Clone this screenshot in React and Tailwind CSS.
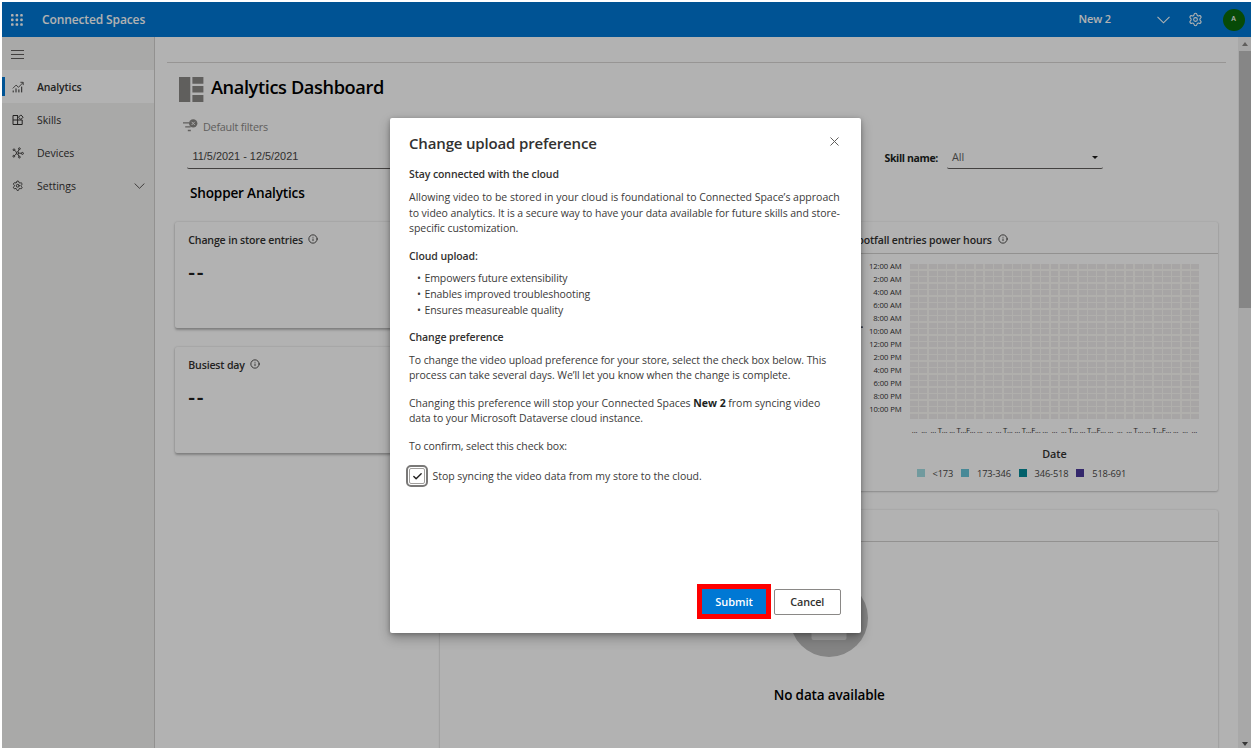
import { Settings, Info, X, Check } from "lucide-react";

const HOURS = [
  "12:00 AM", "2:00 AM", "4:00 AM", "6:00 AM", "8:00 AM", "10:00 AM",
  "12:00 PM", "2:00 PM", "4:00 PM", "6:00 PM", "8:00 PM", "10:00 PM",
];

function dayLabel(i) {
  const day = i % 7;
  if (day === 3 || day === 5) return "T...";
  if (day === 6 && i < 30) return "F...";
  return "...";
}

function Waffle() {
  return (
    <svg width="14" height="14" viewBox="0 0 14 14" fill="#ffffff">
      {[1, 5.6, 10.2].map((y) =>
        [1, 5.6, 10.2].map((x) => <rect key={`${x}-${y}`} x={x} y={y} width="2.6" height="2.6" rx="0.9" />)
      )}
    </svg>
  );
}

function AnalyticsIcon() {
  return (
    <svg width="12" height="12" viewBox="0 0 12 12" fill="none" stroke="#323130" strokeWidth="0.8">
      <path d="M1.2 11.4V9.5M4 11.4V7.4M6.9 11.4V8.4M9.7 11.4V5.6" strokeWidth="1" />
      <path d="M0.8 7.4 4.1 4.1l2.4 2.2L10.8 1.8M8.4 1.3h2.8v2.8" />
    </svg>
  );
}

function SkillsIcon() {
  return (
    <svg width="12" height="12" viewBox="0 0 12 12" fill="none" stroke="#323130" strokeWidth="1">
      <path d="M6 1.5H1v9h9.2V6H1M5.6 1.5v9" />
      <path d="M8.8 0.9 11.1 3.2 8.8 5.5 6.5 3.2z" />
    </svg>
  );
}

function DevicesIcon() {
  return (
    <svg width="12" height="12" viewBox="0 0 12 12" fill="none" stroke="#323130" strokeWidth="0.9">
      <circle cx="5.4" cy="6" r="1.2" />
      <circle cx="2" cy="2.8" r="0.9" />
      <circle cx="7.4" cy="1.7" r="0.9" />
      <circle cx="10.4" cy="6.4" r="1" />
      <circle cx="7.4" cy="10.1" r="0.9" />
      <circle cx="1.8" cy="9.2" r="0.9" />
      <path d="M2.8 3.5 4.4 5M7 2.6 6 4.8M9.4 6.3 6.7 6.1M6.9 9.2 6 7.2M2.5 8.5 4.4 6.9" />
    </svg>
  );
}

function DashboardIcon() {
  return (
    <svg width="25" height="25" viewBox="0 0 25 25" fill="#8a8886">
      <path d="M0 0h11.3v25H0zM13.4 0h11v6.8h-11zM13.4 9h11v6.6h-11zM13.4 18h11v7h-11z" />
    </svg>
  );
}

function FilterIcon() {
  return (
    <svg width="16" height="14" viewBox="0 0 16 14">
      <path d="M0 3.8h6M2.2 7.8h5.4M4.8 11.5h3" stroke="#8a8886" strokeWidth="1.3" />
      <circle cx="10.2" cy="4.4" r="4.2" fill="#8a8886" />
      <path d="m8.6 2.8 3.2 3.2m0-3.2L8.6 6" stroke="#f3f2f1" strokeWidth="1" />
    </svg>
  );
}

function NavItem({ icon, label, active, trailing }) {
  return (
    <div className={active ? "flex h-[33px] items-center bg-white font-semibold tracking-[-0.13px]" : "flex h-[33px] items-center"}>
      <span className={active ? "h-[19px] w-[3px] bg-[#0078d4]" : "h-[19px] w-[3px]"} />
      <span className="ml-[7px] flex w-[12px] justify-center">{icon}</span>
      <span className="ml-[13px] pt-[2.5px] text-[10.5px] text-[#323130]">{label}</span>
      {trailing && <span className="mr-[9px] ml-auto">{trailing}</span>}
    </div>
  );
}

function StatCard({ title }) {
  return (
    <div className="h-[106px] rounded-[2px] bg-white px-[12.9px] pt-[10px] shadow-[0_1.5px_2.5px_rgba(0,0,0,0.27),0_0_2px_rgba(0,0,0,0.12)]">
      <div className="flex h-4 items-center text-[10.6px] font-semibold tracking-[-0.17px] text-[#323130]">
        <span className="pt-px">{title}</span>
        <Info size={10} strokeWidth={2} className="mb-[1.5px] ml-[5px]" />
      </div>
      <div className="mt-[14.5px] flex h-[20px] items-center text-[21px] font-semibold tracking-[1.6px] text-[#201f1e]">--</div>
    </div>
  );
}

function Legend({ swatch, label }) {
  return (
    <div className="flex items-center">
      <span className={`h-2 w-2 ${swatch}`} />
      <span className="ml-[8px] text-[9.3px] tracking-[-0.15px] text-[#484644]">{label}</span>
    </div>
  );
}

function HeatmapCard() {
  return (
    <div className="h-[269px] w-[406px] rounded-[2px] bg-white shadow-[0_1px_2px_rgba(0,0,0,0.2),0_0_2px_rgba(0,0,0,0.12)]">
      <div className="flex h-[32px] items-center border-b border-[#d2d0ce] pt-[5px] pl-[40.5px] text-[10.5px] font-semibold tracking-[-0.13px] text-[#323130]">
        <span className="pt-px">Footfall entries power hours</span>
        <Info size={10} strokeWidth={2} className="mb-[1.5px] ml-[6px]" />
      </div>
      <div className="flex pt-[10px]">
        <div className="flex h-[139px] w-[51.5px] items-center justify-end">
          <span className="rotate-180 text-[10.5px] leading-[14px] font-semibold whitespace-nowrap text-[#323130] [writing-mode:vertical-rl]">
            Hours of operation
          </span>
        </div>
        <div className="-mt-[4.2px] flex w-[38.5px] flex-col">
          {HOURS.map((h) => (
            <span key={h} className="flex h-[13.03px] items-center justify-end text-[7.7px] font-medium tracking-[-0.1px] whitespace-nowrap text-[#323130]">
              {h}
            </span>
          ))}
        </div>
        <div className="ml-[8.5px] w-[289px]">
          <div className="grid h-[155px] grid-cols-[repeat(31,minmax(0,1fr))] grid-rows-[repeat(24,minmax(0,1fr))] gap-x-[1.6px] gap-y-[1.5px] bg-[#fcfbf7]">
            {Array.from({ length: 31 * 24 }, (_, i) => (
              <span key={i} className="bg-[#f0ecec]" />
            ))}
          </div>
          <div className="mt-[5.5px] grid h-[12px] grid-cols-[repeat(31,minmax(0,1fr))]">
            {Array.from({ length: 31 }, (_, i) => (
              <span key={i} className="flex items-center justify-center text-[7.7px] tracking-[-0.15px] text-[#323130]">
                {dayLabel(i)}
              </span>
            ))}
          </div>
          <div className="mt-[9.5px] h-4 text-center text-[10.8px] leading-4 font-semibold text-[#323130]">Date</div>
        </div>
      </div>
      <div className="mt-[4.5px] flex gap-[7.8px] pl-[105px]">
        <Legend swatch="bg-[#a3dde3]" label="<173" />
        <Legend swatch="bg-[#68c4d8]" label="173-346" />
        <Legend swatch="bg-[#038b9a]" label="346-518" />
        <Legend swatch="bg-[#4b3a9b]" label="518-691" />
      </div>
    </div>
  );
}

function Dialog() {
  return (
    <div className="flex h-[515px] w-[470.5px] flex-col rounded-[2px] bg-white pr-[19px] pl-[19px] text-[10.5px] leading-[15.7px] tracking-[-0.055px] text-[#3b3a39] shadow-[0_5px_12px_rgba(0,0,0,0.28),0_1px_4px_rgba(0,0,0,0.25)]">
      <div className="flex items-start justify-between pt-[15px]">
        <h2 className="text-[15px] leading-[20px] font-semibold tracking-[-0.16px] text-[#323130]">Change upload preference</h2>
        <X size={15} strokeWidth={1.6} className="-mr-[0.5px] mt-px text-[#605e5c]" />
      </div>
      <h3 className="mt-[13.6px] font-semibold tracking-[-0.09px] text-[#323130]">Stay connected with the cloud</h3>
      <p className="mt-[7.7px] whitespace-nowrap">
        <span className="tracking-[-0.003px]">Allowing video to be stored in your cloud is foundational to Connected Space’s approach</span><br />
        to video analytics. It is a secure way to have your data available for future skills and store-<br />
        specific customization.
      </p>
      <h3 className="mt-[11.6px] font-semibold tracking-[-0.09px] text-[#323130]">Cloud upload:</h3>
      <ul className="mt-[7px] pl-[8px] tracking-[-0.1px]">
        <li><span className="inline-block w-[7.5px]">•</span>Empowers future extensibility</li>
        <li><span className="inline-block w-[7.5px]">•</span>Enables improved troubleshooting</li>
        <li><span className="inline-block w-[7.5px]">•</span>Ensures measureable quality</li>
      </ul>
      <h3 className="mt-[11.3px] font-semibold tracking-[-0.1px] text-[#323130]">Change preference</h3>
      <p className="mt-[7px] whitespace-nowrap">
        <span className="tracking-[-0.065px]">To change the video upload preference for your store, select the check box below. This</span><br />
        process can take several days. We’ll let you know when the change is complete.
      </p>
      <p className="mt-[11.8px] whitespace-nowrap tracking-[-0.025px]">
        Changing this preference will stop your Connected Spaces <b className="font-bold text-[#201f1e]">New 2</b> from syncing video<br />
        <span className="tracking-[-0.06px]">data to your Microsoft Dataverse cloud instance.</span>
      </p>
      <p className="mt-[11.7px] tracking-[-0.1px]">To confirm, select this check box:</p>
      <div className="mt-[10.5px] -ml-[3px] flex items-center tracking-[-0.02px]">
        <span className="flex size-[22px] items-center justify-center rounded-[5px] border-2 border-[#7a7978]">
          <span className="flex size-[16px] items-center justify-center rounded-[2px] border border-[#a19f9d]">
            <Check size={11} strokeWidth={3} className="text-[#201f1e]" />
          </span>
        </span>
        <span className="ml-[4.5px] pt-px">Stop syncing the video data from my store to the cloud.</span>
      </div>
      <div className="mt-auto mb-[14px] flex items-center justify-end gap-[2.5px] font-semibold">
        <button className="h-[35px] w-[74px] border-[5.5px] border-[#fe0000] bg-[#0078d4] text-[11px] leading-none text-white">Submit</button>
        <button className="mr-[0.5px] h-[26px] w-[67.5px] rounded-[2px] border border-[#8a8886] bg-white text-[10.8px] tracking-[-0.1px] text-[#323130]">Cancel</button>
      </div>
    </div>
  );
}

export default function App() {
  return (
    <div className="h-[748px] w-[1254px] overflow-hidden bg-white pt-[2px] pr-[3px] pl-[2px] font-['Open_Sans','Noto_Sans',sans-serif]">
      <div className="relative flex h-[746px] w-[1249px] flex-col overflow-hidden bg-white">
        <header className="flex h-[35px] shrink-0 items-center bg-[#0078d4] pl-[8px] text-white">
          <Waffle />
          <span className="ml-[18px] text-[12px] font-semibold tracking-[-0.12px]">Connected Spaces</span>
          <span className="ml-auto text-[11px] font-semibold tracking-[-0.1px]">New 2</span>
          <svg className="ml-[46px]" width="13" height="8" viewBox="0 0 13 8" fill="none" stroke="#ffffff" strokeWidth="1.1"><path d="M0.5 0.8 6.5 6.8 12.5 0.8" /></svg>
          <Settings size={15} strokeWidth={1.7} className="ml-[18px]" />
          <span className="mr-[6.5px] ml-[19.5px] flex size-[22px] items-center justify-center rounded-full bg-[#0b6a0b] text-[7px] font-semibold">A</span>
        </header>
        <div className="flex min-h-0 flex-1">
          <nav className="w-[153px] shrink-0 border-r border-[#d2d0ce] bg-[#f3f2f1]">
            <div className="flex h-[33px] items-center pt-px pl-[9px]">
              <svg width="13" height="9" viewBox="0 0 13 9" stroke="#605e5c" strokeWidth="1"><path d="M0 .5h13M0 4.5h13M0 8.5h13" /></svg>
            </div>
            <NavItem active icon={<AnalyticsIcon />} label="Analytics" />
            <NavItem icon={<SkillsIcon />} label="Skills" />
            <NavItem icon={<DevicesIcon />} label="Devices" />
            <NavItem
              icon={<Settings size={11.5} strokeWidth={1.9} color="#323130" />}
              label="Settings"
              trailing={<svg width="11" height="6" viewBox="0 0 11 6" fill="none" stroke="#484644" strokeWidth="0.9"><path d="M0.6 0.5 5.5 5.3 10.4 0.5" /></svg>}
            />
          </nav>
          <main className="min-w-0 flex-1 overflow-hidden pl-[12px]">
            <div className="h-[26px] w-[1059px] border-b border-[#d8d6d4]" />
            <div className="flex w-[1050.5px] flex-col pl-[8px]">
              <div className="mt-[14px] flex h-[25px] items-center pl-[4.4px]">
                <DashboardIcon />
                <h1 className="mb-[3px] ml-[6.5px] text-[18.2px] font-semibold tracking-[-0.38px] text-black">Analytics Dashboard</h1>
              </div>
              <div className="mt-[17px] flex h-[16px] items-center pl-[8.4px]">
                <span className="mb-[3px]"><FilterIcon /></span>
                <span className="ml-[3.5px] pt-px text-[10.8px] tracking-[-0.2px] text-[#8a8886]">Default filters</span>
              </div>
              <div className="mt-[11px] flex h-[23px] justify-between pl-[12px]">
                <div className="h-[23px] w-[260px] rounded-b-[2px] border-b border-[#605e5c] pl-[5.5px] font-['Liberation_Sans',sans-serif] text-[10.9px] leading-[21px] text-[#484644]">
                  11/5/2021 - 12/5/2021
                </div>
                <div className="mr-[114.5px] flex items-center">
                  <span className="mr-[9px] pt-[2px] text-[10.5px] font-bold tracking-[-0.35px] text-[#201f1e]">Skill name:</span>
                  <div className="flex h-[23px] w-[156px] items-center justify-between rounded-b-[2px] border-b border-[#605e5c] pr-[5px] pl-[5px] text-[10.8px] text-[#605e5c]">
                    All
                    <svg width="6" height="3" viewBox="0 0 6 3" fill="#201f1e"><path d="M0 0h6L3 3z" /></svg>
                  </div>
                </div>
              </div>
              <h2 className="mt-[15px] h-[18px] pl-[15px] text-[13.6px] leading-[18px] font-semibold tracking-[-0.18px] text-black">Shopper Analytics</h2>
              <div className="mt-[20px] flex justify-between pl-[0.4px]">
                <div className="flex w-[246px] flex-col gap-[19px]">
                  <StatCard title="Change in store entries" />
                  <StatCard title="Busiest day" />
                </div>
                <HeatmapCard />
              </div>
              <div className="mt-[19px] ml-auto flex h-[260px] w-[777.5px] flex-col items-center rounded-[2px] bg-white shadow-[0_1px_2px_rgba(0,0,0,0.2),0_0_2px_rgba(0,0,0,0.15)]">
                <div className="h-[32px] w-full border-b border-[#d2d0ce]" />
                <svg className="mt-[37px]" width="78" height="78" viewBox="0 0 78 78">
                  <circle cx="39" cy="39" r="39" fill="#bdbdbd" />
                  <rect x="21.5" y="24" width="35" height="37" rx="2" fill="#e6e6e6" />
                </svg>
                <div className="mt-[28px] pl-px text-[13.5px] leading-[20px] font-semibold tracking-[-0.14px] text-black">No data available</div>
              </div>
            </div>
          </main>
          <div className="flex w-[13px] shrink-0 flex-col items-center bg-[#f1f1f1]">
            <div className="flex h-[14px] items-center"><svg width="6" height="4" viewBox="0 0 6 4" fill="#8a8886"><path d="M0 4h6L3 0z" /></svg></div>
            <div className="h-[257px] w-[12px] bg-[#c1c1c1]" />
            <div className="mt-auto flex h-[9px] items-center"><svg width="6" height="4" viewBox="0 0 6 4" fill="#505050"><path d="M0 0h6L3 4z" /></svg></div>
          </div>
        </div>
        <div className="absolute inset-0 bg-black/30 pt-[116px] pl-[388px]">
          <Dialog />
        </div>
      </div>
    </div>
  );
}
